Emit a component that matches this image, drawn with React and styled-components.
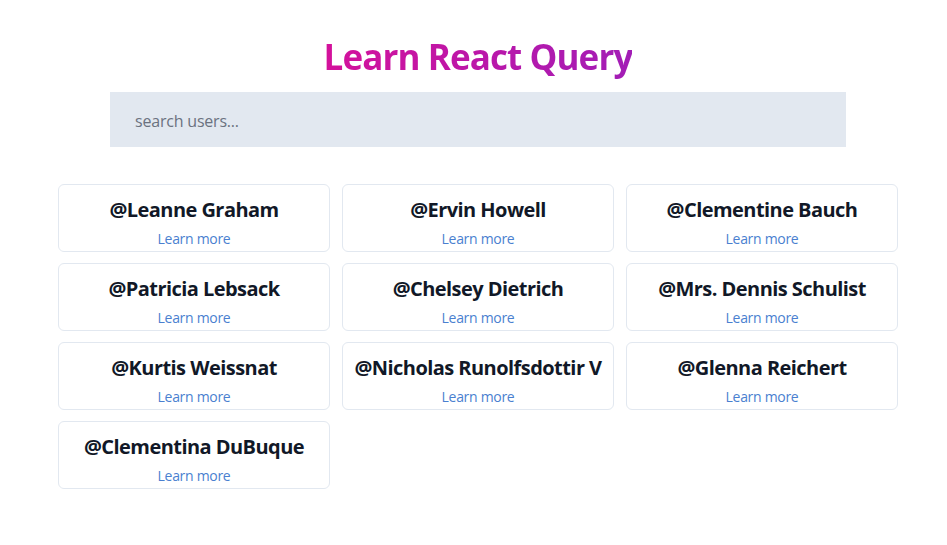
import React from 'react';
import styled, { createGlobalStyle } from 'styled-components';

const GlobalStyle = createGlobalStyle`
  * { box-sizing: border-box; }
  body {
    margin: 0;
    background: #ffffff;
    font-family: "Segoe UI", "Open Sans", "Noto Sans", sans-serif;
  }
`;

const users = [
  'Leanne Graham',
  'Ervin Howell',
  'Clementine Bauch',
  'Patricia Lebsack',
  'Chelsey Dietrich',
  'Mrs. Dennis Schulist',
  'Kurtis Weissnat',
  'Nicholas Runolfsdottir V',
  'Glenna Reichert',
  'Clementina DuBuque',
];

const Page = styled.main`
  width: 840px;
  margin-left: 58px;
  padding-top: 33px;
  display: flex;
  flex-direction: column;
  align-items: center;
`;

const Title = styled.h1`
  margin: 0;
  font-size: 35px;
  line-height: 48px;
  font-weight: 700;
  letter-spacing: -0.9px;
  background: linear-gradient(90deg, #d4119b, #a21db6);
  -webkit-background-clip: text;
  background-clip: text;
  color: transparent;
`;

const Search = styled.input`
  margin-top: 11px;
  width: 736px;
  height: 55px;
  border: none;
  outline: none;
  background: #e2e8f0;
  padding: 2px 25px 0;
  font-family: inherit;
  font-size: 16px;
  letter-spacing: -0.2px;
  color: #1f2937;

  &::placeholder {
    color: #6b7280;
  }
`;

const Grid = styled.section`
  margin-top: 37px;
  width: 100%;
  display: grid;
  grid-template-columns: repeat(3, 1fr);
  column-gap: 12px;
  row-gap: 11px;
`;

const Card = styled.div`
  height: 68px;
  border: 1px solid #e2e8f0;
  border-radius: 6px;
  display: flex;
  flex-direction: column;
  align-items: center;
  padding-top: 11px;
`;

const Name = styled.h2`
  margin: 0;
  font-size: 20px;
  line-height: 28px;
  font-weight: 700;
  letter-spacing: -0.55px;
  color: #111827;
  white-space: nowrap;
`;

const More = styled.a`
  margin-top: 5px;
  font-size: 14px;
  line-height: 20px;
  color: #4a7fd0;
  text-decoration: none;
  font-weight: 500;
  letter-spacing: -0.3px;
`;

export default function App() {
  return (
    <>
      <GlobalStyle />
      <Page>
        <Title>Learn React Query</Title>
        <Search placeholder="search users..." />
        <Grid>
          {users.map((u) => (
            <Card key={u}>
              <Name>@{u}</Name>
              <More href="#">Learn more</More>
            </Card>
          ))}
        </Grid>
      </Page>
    </>
  );
}
